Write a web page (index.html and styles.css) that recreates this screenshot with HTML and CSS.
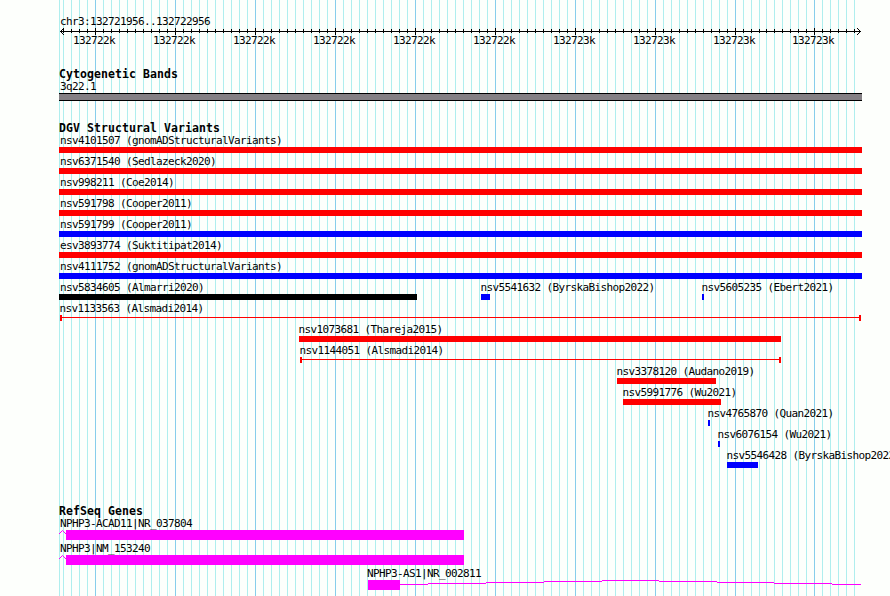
FILE: index.html
```
<!DOCTYPE html>
<html lang="en">
<head>
    <meta charset="UTF-8">
    <title>chr3:132721956..132722956</title>
    <link rel="stylesheet" href="styles.css">
</head>
<body>
    <div class="browser">
        <div class="grid">
            <div class="grid-left"></div>
            <div class="grid-right"></div>
        </div>

        <div class="ruler">
            <div class="label">chr3:132721956..132722956</div>
            <svg class="scale" width="803" height="9" viewBox="59 27 803 9">
                <path class="axis" d="M60 31.5H861"/>
                <path class="tick" d="M63 31H763M766 31H858"/>
                <path class="major" d="M95 31.5H736M814 31.5H815"/>
                <path class="arrow" d="M64 28L60.5 31.5L64 35M857 28L860.5 31.5L857 35"/>
            </svg>
            <div class="numbers">
                <span>132722k</span><span>132722k</span><span>132722k</span><span>132722k</span><span>132722k</span><span>132722k</span><span>132723k</span><span>132723k</span><span class="short">132723k</span><span>132723k</span>
            </div>
        </div>

        <div class="track bands">
            <h2>Cytogenetic Bands</h2>
            <div class="label">3q22.1</div>
            <div class="band"></div>
        </div>

        <div class="track variants">
            <h2>DGV Structural Variants</h2>
            <div class="lane"><div class="feature clipped" style="width: 803px"><div class="label">nsv4101507 (gnomADStructuralVariants)</div><div class="bar red"></div></div></div>
            <div class="lane"><div class="feature clipped" style="width: 803px"><div class="label">nsv6371540 (Sedlazeck2020)</div><div class="bar red"></div></div></div>
            <div class="lane"><div class="feature clipped" style="width: 803px"><div class="label">nsv998211 (Coe2014)</div><div class="bar red"></div></div></div>
            <div class="lane"><div class="feature clipped" style="width: 803px"><div class="label">nsv591798 (Cooper2011)</div><div class="bar red"></div></div></div>
            <div class="lane"><div class="feature clipped" style="width: 803px"><div class="label">nsv591799 (Cooper2011)</div><div class="bar blue"></div></div></div>
            <div class="lane"><div class="feature clipped" style="width: 803px"><div class="label">esv3893774 (Suktitipat2014)</div><div class="bar red"></div></div></div>
            <div class="lane"><div class="feature clipped" style="width: 803px"><div class="label">nsv4111752 (gnomADStructuralVariants)</div><div class="bar blue"></div></div></div>
            <div class="lane">
                <div class="feature clipped" style="width: 358px"><div class="label">nsv5834605 (Almarri2020)</div><div class="bar black"></div></div>
                <div class="feature" style="margin-left: 64px; width: 9px"><div class="label">nsv5541632 (ByrskaBishop2022)</div><div class="bar blue"></div></div>
                <div class="feature" style="margin-left: 212px; width: 2px"><div class="label">nsv5605235 (Ebert2021)</div><div class="bar blue"></div></div>
            </div>
            <div class="lane"><div class="feature" style="margin-left: 1px; width: 801px"><div class="label">nsv1133563 (Alsmadi2014)</div><div class="span"></div></div></div>
            <div class="lane"><div class="feature" style="margin-left: 240px; width: 482px"><div class="label">nsv1073681 (Thareja2015)</div><div class="bar red"></div></div></div>
            <div class="lane"><div class="feature" style="margin-left: 241px; width: 481px"><div class="label">nsv1144051 (Alsmadi2014)</div><div class="span"></div></div></div>
            <div class="lane"><div class="feature" style="margin-left: 558px; width: 99px"><div class="label">nsv3378120 (Audano2019)</div><div class="bar red"></div></div></div>
            <div class="lane"><div class="feature" style="margin-left: 564px; width: 98px"><div class="label">nsv5991776 (Wu2021)</div><div class="bar red"></div></div></div>
            <div class="lane"><div class="feature" style="margin-left: 649px; width: 2px"><div class="label">nsv4765870 (Quan2021)</div><div class="bar blue"></div></div></div>
            <div class="lane"><div class="feature" style="margin-left: 659px; width: 2px"><div class="label">nsv6076154 (Wu2021)</div><div class="bar blue"></div></div></div>
            <div class="lane"><div class="feature" style="margin-left: 668px; width: 31px"><div class="label">nsv5546428 (ByrskaBishop2022)</div><div class="bar blue"></div></div></div>
        </div>

        <div class="track genes">
            <h2>RefSeq Genes</h2>
            <div class="gene">
                <div class="label">NPHP3-ACAD11|NR_037804</div>
                <svg width="803" height="10"><path class="intron" d="M0 4L3.5 .5L7 4"/><rect class="exon" x="7" width="398" height="10"/></svg>
            </div>
            <div class="gene">
                <div class="label">NPHP3|NM_153240</div>
                <svg width="803" height="10"><path class="intron" d="M0 4L3.5 .5L7 4"/><rect class="exon" x="7" width="398" height="10"/></svg>
            </div>
            <div class="gene">
                <div class="label as1">NPHP3-AS1|NR_002811</div>
                <svg width="803" height="10">
                    <rect class="exon" x="309" width="32" height="10"/>
                    <path class="step" d="M341 4.5H369M369 3.5H427M427 2.5H485M485 1.5H543M543 .5H600M600 1.5H658M658 2.5H715M715 3.5H773M773 4.5H802"/>
                </svg>
            </div>
        </div>
    </div>
</body>
</html>
```
FILE: styles.css
```
body {
    margin: 0;
    background-color: #fdfffc;
    color: #000;
    overflow: hidden;
}
.browser {
    position: relative;
    box-sizing: border-box;
    width: 862px;
    height: 596px;
    padding: 15px 0 0 59px;
    font-family: "DejaVu Sans Mono", monospace;
    font-size: 11px;
    line-height: 13px;
}

/* vertical guide lines behind the tracks */
.grid {
    position: absolute;
    top: 0;
    bottom: 0;
    left: 59px;
    width: 803px;
    display: flex;
    z-index: -1;
}
.grid-left, .grid-right {
    background-image:
        linear-gradient(90deg, #87ceeb 1px, transparent 1px),
        linear-gradient(90deg, #afeeee 1px, transparent 1px);
    background-size: 80px 100%, 8px 100%;
}
.grid-left {
    box-sizing: border-box;
    width: 704px;
    border-left: 1px solid #afeeee;
    background-position: 35px 0, 3px 0;
}
.grid-right {
    width: 99px;
    background-position: 51px 0, 3px 0;
}

.label {
    height: 13px;
    padding-left: 1px;
    letter-spacing: -0.622px;
    white-space: nowrap;
}
h2 {
    margin: 0;
    height: 12px;
    font-size: 11.5px;
    line-height: 13px;
    letter-spacing: 0.077px;
}
svg {
    display: block;
    shape-rendering: crispEdges;
}

.ruler {
    height: 53px;
}
.scale {
    margin-top: -1px;
    fill: none;
    stroke: #000;
}
.tick {
    stroke-width: 4;
    stroke-dasharray: 1 7;
}
.major {
    stroke-width: 7;
    stroke-dasharray: 1 79;
}
.arrow {
    shape-rendering: auto;
}
.numbers {
    display: flex;
    margin: -2px 0 0 14px;
    letter-spacing: -0.622px;
}
.numbers span {
    flex: 0 0 80px;
}
.numbers .short {
    flex-basis: 79px;
}

.bands {
    height: 54px;
}
.band {
    box-sizing: border-box;
    height: 8px;
    border: solid #000;
    border-width: 1px 0;
    background-color: #848084;
}

.variants {
    height: 383px;
}
.lane {
    display: flex;
    height: 21px;
}
.feature {
    flex: none;
}
.feature .label {
    padding-left: 0;
    margin-left: -0.6px;
}
.clipped .label {
    padding-left: 1px;
    margin-left: 0;
}
.bar {
    height: 6px;
}
.red {
    background-color: #f00;
}
.blue {
    background-color: #00f;
}
.black {
    background-color: #000;
}
.span {
    box-sizing: border-box;
    height: 6px;
    border: solid #f00;
    border-width: 0 2px;
    background: linear-gradient(#f00, #f00) 0 2px / 100% 1px no-repeat;
}

.gene {
    height: 25px;
}
.exon {
    fill: #f0f;
}
.intron, .step {
    fill: none;
    stroke: #f0f;
}
.intron {
    shape-rendering: auto;
}
.gene .as1 {
    padding-left: 308px;
}
```
